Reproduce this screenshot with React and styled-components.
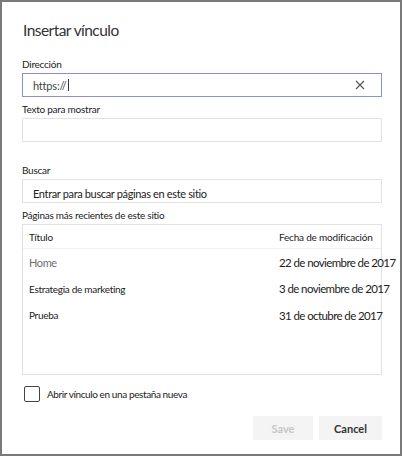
import React from "react";
import styled, { createGlobalStyle } from "styled-components";

const GlobalStyle = createGlobalStyle`
  html, body {
    margin: 0;
    padding: 0;
    background: #ffffff;
  }
  body {
    font-family: "Segoe UI", Lato, "Liberation Sans", sans-serif;
    color: #333333;
  }
`;

const pages = [
  { title: "Home", date: "22 de noviembre de 2017", muted: true },
  { title: "Estrategia de marketing", date: "3 de noviembre de 2017" },
  { title: "Prueba", date: "31 de octubre de 2017" },
];

const App = () => {
  return (
    <Frame>
      <GlobalStyle />
      <Title>Insertar vínculo</Title>

      <Field>
        <Label>Dirección</Label>
        <Input focused>
          <InputText>
            https://
            <Caret />
          </InputText>
          <ClearButton aria-label="Borrar">
            <svg width="10" height="10" viewBox="0 0 10 10">
              <path d="M1 1 L9 9 M9 1 L1 9" stroke="#555" strokeWidth="1.1" fill="none" />
            </svg>
          </ClearButton>
        </Input>
      </Field>

      <Field>
        <Label>Texto para mostrar</Label>
        <Input />
      </Field>

      <Field spaced>
        <Label>Buscar</Label>
        <Input>
          <Placeholder>Entrar para buscar páginas en este sitio</Placeholder>
        </Input>
      </Field>

      <Field>
        <Label>Páginas más recientes de este sitio</Label>
        <Table>
          <HeaderRow>
            <HeadCell>Título</HeadCell>
            <HeadCell>Fecha de modificación</HeadCell>
          </HeaderRow>
          {pages.map((p) => (
            <Row key={p.title}>
              <Cell muted={p.muted}>{p.title}</Cell>
              <DateCell>{p.date}</DateCell>
            </Row>
          ))}
        </Table>
      </Field>

      <CheckRow>
        <Box />
        <CheckLabel>Abrir vínculo en una pestaña nueva</CheckLabel>
      </CheckRow>

      <Footer>
        <Button disabled>Save</Button>
        <Button>Cancel</Button>
      </Footer>
    </Frame>
  );
};

export default App;

const Frame = styled.div`
  box-sizing: border-box;
  width: 402px;
  height: 456px;
  border: 2px solid #7a7a7a;
  padding: 16px 18px 0 20px;
  display: flex;
  flex-direction: column;
`;

const Title = styled.h1`
  margin: 0 0 0 1px;
  font-size: 15.5px;
  font-weight: 400;
  line-height: 24px;
  letter-spacing: -0.55px;
  color: #333;
`;

const Field = styled.div`
  display: flex;
  flex-direction: column;
  margin-top: ${(p) => (p.spaced ? "20px" : "4px")};

  &:first-of-type {
    margin-top: 14px;
  }
`;

const Label = styled.div`
  font-size: 10px;
  line-height: 16px;
  letter-spacing: -0.25px;
  color: #222;
  margin-bottom: 1px;
  white-space: nowrap;
`;

const Input = styled.div`
  box-sizing: border-box;
  height: 24px;
  border: 1px solid ${(p) => (p.focused ? "#8b8fd8" : "#e2e2e2")};
  display: flex;
  align-items: center;
  padding: 0 10px;
`;

const InputText = styled.span`
  flex: 1;
  font-size: 11px;
  letter-spacing: -0.2px;
  color: #444;
  display: flex;
  align-items: center;
`;

const Caret = styled.span`
  display: inline-block;
  width: 1px;
  height: 12px;
  background: #333;
  margin-left: 1px;
`;

const ClearButton = styled.span`
  display: flex;
  margin-right: 6px;
`;

const Placeholder = styled.span`
  font-size: 11px;
  letter-spacing: -0.35px;
  color: #222;
  padding-top: 4px;
`;

const Table = styled.div`
  box-sizing: border-box;
  height: 151px;
  border: 1px solid #e2e2e2;
  display: flex;
  flex-direction: column;
`;

const HeaderRow = styled.div`
  display: grid;
  grid-template-columns: 250px 1fr;
  height: 23px;
  align-items: center;
  padding-left: 6px;
  border-bottom: 1px solid #efefef;
`;

const HeadCell = styled.div`
  font-size: 10px;
  letter-spacing: -0.2px;
  color: #222;
  white-space: nowrap;
`;

const Row = styled.div`
  display: grid;
  grid-template-columns: 250px 1fr;
  height: 26.5px;
  align-items: center;
  padding-left: 6px;
`;

const Cell = styled.div`
  font-size: ${(p) => (p.muted ? "11px" : "10px")};
  letter-spacing: ${(p) => (p.muted ? "-0.4px" : "-0.3px")};
  color: ${(p) => (p.muted ? "#6f6f6f" : "#222")};
  white-space: nowrap;
`;

const DateCell = styled.div`
  font-size: 11.5px;
  letter-spacing: -0.6px;
  color: #222;
  white-space: nowrap;
`;

const CheckRow = styled.div`
  display: flex;
  align-items: center;
  gap: 7px;
  margin-top: 11px;
  margin-left: 2px;
`;

const Box = styled.span`
  box-sizing: border-box;
  width: 16px;
  height: 16px;
  border: 1px solid #444;
  border-radius: 2px;
`;

const CheckLabel = styled.span`
  font-size: 10px;
  letter-spacing: -0.4px;
  color: #222;
`;

const Footer = styled.div`
  display: flex;
  justify-content: flex-end;
  gap: 6px;
  margin-top: 14px;
`;

const Button = styled.button`
  height: 24px;
  min-width: 60px;
  padding: 0 12px;
  border: none;
  background: #f4f4f4;
  font-family: inherit;
  font-size: 11px;
  font-weight: 700;
  color: ${(p) => (p.disabled ? "#c6c6c6" : "#333")};
  &:last-child {
    min-width: 63px;
  }
`;
